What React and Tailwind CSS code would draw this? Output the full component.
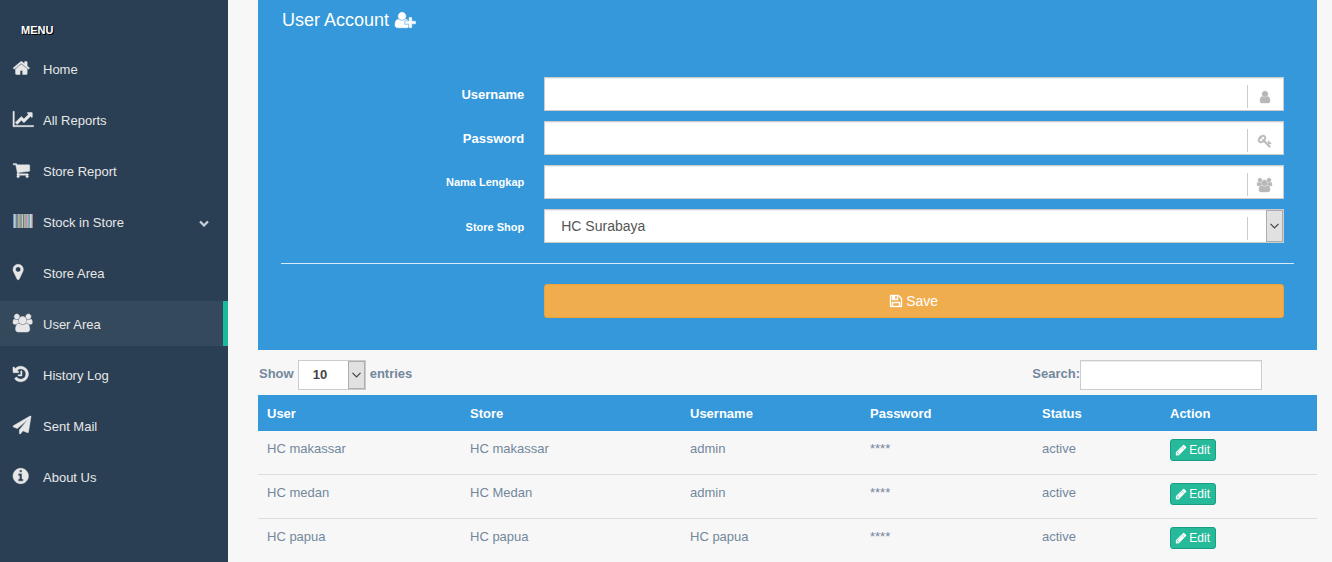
import { useState } from 'react';

// [viewBox, path] for each glyph, 1792 units tall
const glyphs = {
  home: ['64 0 1664 1792', 'M1472 992v480q0 26-19 45t-45 19h-384v-384h-256v384h-384q-26 0-45-19t-19-45v-480q0-1 .5-3t.5-3l575-474 575 474q1 2 1 6zm223-69l-62 74q-8 9-21 11h-3q-13 0-21-7l-692-577-692 577q-12 8-24 7-13-2-21-11l-62-74q-8-10-7-23.5t11-21.5l719-599q32-26 76-26t76 26l244 204v-195q0-14 9-23t23-9h192q14 0 23 9t9 23v408l219 182q10 8 11 21.5t-7 23.5z'],
  chart: ['0 0 2048 1792', 'M2048 1536v128h-2048v-1536h128v1408h1920zm-128-1248v435q0 21-19.5 29.5t-35.5-7.5l-121-121-633 633q-10 10-23 10t-23-10l-233-233-416 416-192-192 585-585q10-10 23-10t23 10l233 233 464-464-121-121q-16-16-7.5-35.5t29.5-19.5h435q14 0 23 9t9 23z'],
  cart: ['64 0 1664 1792', 'M704 1536q0 52-38 90t-90 38-90-38-38-90 38-90 90-38 90 38 38 90zm896 0q0 52-38 90t-90 38-90-38-38-90 38-90 90-38 90 38 38 90zm128-1088v512q0 24-16.5 42.5t-40.5 21.5l-1044 122q13 60 13 70 0 16-24 64h920q26 0 45 19t19 45-19 45-45 19h-1024q-26 0-45-19t-19-45q0-11 8-31.5t16-36 21.5-40 15.5-29.5l-177-823h-204q-26 0-45-19t-19-45 19-45 45-19h256q16 0 28.5 6.5t19.5 15.5 13 24.5 8 26 5.5 29.5 4.5 26h1201q26 0 45 19t19 45z'],
  marker: ['384 0 1024 1792', 'M1152 640q0-106-75-181t-181-75-181 75-75 181 75 181 181 75 181-75 75-181zm256 0q0 109-33 179l-364 774q-16 33-47.5 52t-67.5 19-67.5-19-46.5-52l-365-774q-33-70-33-179 0-212 150-362t362-150 362 150 150 362z'],
  users: ['0 0 1920 1792', 'M593 896q-162 5-265 128h-134q-82 0-138-40.5t-56-118.5q0-353 124-353 6 0 43.5 21t97.5 42.5 119 21.5q67 0 133-23-5 37-5 66 0 139 81 256zm1071 637q0 120-73 189.5t-194 69.5h-874q-121 0-194-69.5t-73-189.5q0-53 3.5-103.5t14-109 26.5-108.5 43-97.5 62-81 85.5-53.5 111.5-20q10 0 43 21.5t73 48 107 48 135 21.5 135-21.5 107-48 73-48 43-21.5q61 0 111.5 20t85.5 53.5 62 81 43 97.5 26.5 108.5 14 109 3.5 103.5zm-1024-1277q0 106-75 181t-181 75-181-75-75-181 75-181 181-75 181 75 75 181zm704 384q0 159-112.5 271.5t-271.5 112.5-271.5-112.5-112.5-271.5 112.5-271.5 271.5-112.5 271.5 112.5 112.5 271.5zm576 225q0 78-56 118.5t-138 40.5h-134q-103-123-265-128 81-117 81-256 0-29-5-66 66 23 133 23 59 0 119-21.5t97.5-42.5 43.5-21q124 0 124 353zm-128-609q0 106-75 181t-181 75-181-75-75-181 75-181 181-75 181 75 75 181z'],
  history: ['128 0 1536 1792', 'M1664 896q0 156-61 298t-164 245-245 164-298 61q-172 0-327-72.5t-264-204.5q-7-10-6.5-22.5t8.5-20.5l137-138q10-9 25-9 16 2 23 12 73 95 179 147t225 52q104 0 198.5-40.5t163.5-109.5 109.5-163.5 40.5-198.5-40.5-198.5-109.5-163.5-163.5-109.5-198.5-40.5q-98 0-188 35.5t-160 101.5l137 138q31 30 14 69-17 40-59 40h-448q-26 0-45-19t-19-45v-448q0-42 40-59 39-17 69 14l130 129q107-101 244.5-156.5t284.5-55.5q156 0 298 61t245 164 164 245 61 298zm-640-288v448q0 14-9 23t-23 9h-320q-14 0-23-9t-9-23v-64q0-14 9-23t23-9h224v-352q0-14 9-23t23-9h64q14 0 23 9t9 23z'],
  plane: ['0 0 1792 1792', 'M1764 11q33 24 27 64l-256 1536q-5 29-32 45-14 8-31 8-11 0-24-5l-453-185-242 295q-18 23-49 23-13 0-22-4-19-7-30.5-23.5t-11.5-36.5v-349l864-1059-1069 925-395-162q-37-14-40-55-2-40 32-59l1664-960q15-9 32-9 20 0 36 11z'],
  info: ['128 0 1536 1792', 'M1152 1376v-160q0-14-9-23t-23-9h-96v-512q0-14-9-23t-23-9h-320q-14 0-23 9t-9 23v160q0 14 9 23t23 9h96v320h-96q-14 0-23 9t-9 23v160q0 14 9 23t23 9h448q14 0 23-9t9-23zm-128-896v-160q0-14-9-23t-23-9h-192q-14 0-23 9t-9 23v160q0 14 9 23t23 9h192q14 0 23-9t9-23zm640 416q0 209-103 385.5t-279.5 279.5-385.5 103-385.5-103-279.5-279.5-103-385.5 103-385.5 279.5-279.5 385.5-103 385.5 103 279.5 279.5 103 385.5z'],
  chevron: ['0 0 1792 1792', 'M1683 808l-742 741q-19 19-45 19t-45-19l-742-741q-19-19-19-45.5t19-45.5l166-165q19-19 45-19t45 19l531 531 531-531q19-19 45-19t45 19l166 165q19 19 19 45.5t-19 45.5z'],
  userPlus: ['0 0 2048 1792', 'M704 896q-159 0-271.5-112.5t-112.5-271.5 112.5-271.5 271.5-112.5 271.5 112.5 112.5 271.5-112.5 271.5-271.5 112.5zm960 128h352q13 0 22.5 9.5t9.5 22.5v192q0 13-9.5 22.5t-22.5 9.5h-352v352q0 13-9.5 22.5t-22.5 9.5h-192q-13 0-22.5-9.5t-9.5-22.5v-352h-352q-13 0-22.5-9.5t-9.5-22.5v-192q0-13 9.5-22.5t22.5-9.5h352v-352q0-13 9.5-22.5t22.5-9.5h192q13 0 22.5 9.5t9.5 22.5v352zm-736 224q0 52 38 90t90 38h256v238q-68 50-171 50h-874q-121 0-194-69t-73-190q0-53 3.5-103.5t14-109 26.5-108.5 43-97.5 62-81 85.5-53.5 111.5-20q19 0 39 17 79 61 154.5 91.5t164.5 30.5 164.5-30.5 154.5-91.5q20-17 39-17 132 0 217 96h-223q-52 0-90 38t-38 90v192z'],
  user: ['256 0 1280 1792', 'M1536 1399q0 109-62.5 187t-150.5 78h-854q-88 0-150.5-78t-62.5-187q0-85 8.5-160.5t31.5-152 58.5-131 94-89 134.5-34.5q131 128 313 128t313-128q76 0 134.5 34.5t94 89 58.5 131 31.5 152 8.5 160.5zm-256-887q0 159-112.5 271.5t-271.5 112.5-271.5-112.5-112.5-271.5 112.5-271.5 271.5-112.5 271.5 112.5 112.5 271.5z'],
  key: ['0 0 1792 1792', 'M832 512q0-80-56-136t-136-56-136 56-56 136q0 42 19 83-41-19-83-19-80 0-136 56t-56 136 56 136 136 56 136-56 56-136q0-42-19-83 41 19 83 19 80 0 136-56t56-136zm851 704q0 17-49 66t-66 49q-9 0-28.5-16t-36.5-33-38.5-40-24.5-26l-96 96 220 220q28 28 28 68 0 42-39 81t-81 39q-40 0-68-28l-671-671q-176 131-365 131-163 0-265.5-102.5t-102.5-265.5q0-160 95-313t248-248 313-95q163 0 265.5 102.5t102.5 265.5q0 189-131 365l355 355 96-96q-3-3-26-24.5t-40-38.5-33-36.5-16-28.5q0-17 49-66t66-49q13 0 23 10 6 6 46 44.5t82 79.5 86.5 86 73 78 28.5 41z'],
  save: ['128 0 1536 1792', 'M512 1536h768v-384h-768v384zm896 0h128v-896q0-14-10-38.5t-20-34.5l-281-281q-10-10-34-20t-39-10v416q0 40-28 68t-68 28h-576q-40 0-68-28t-28-68v-416h-128v1280h128v-416q0-40 28-68t68-28h832q40 0 68 28t28 68v416zm-384-928v-320q0-13-9.5-22.5t-22.5-9.5h-192q-13 0-22.5 9.5t-9.5 22.5v320q0 13 9.5 22.5t22.5 9.5h192q13 0 22.5-9.5t9.5-22.5zm640 32v928q0 40-28 68t-68 28h-1344q-40 0-68-28t-28-68v-1344q0-40 28-68t68-28h928q40 0 88 20t76 48l280 280q28 28 48 76t20 88z'],
  pencil: ['128 0 1536 1792', 'M491 1536l91-91-235-235-91 91v107h128v128h107zm523-928q0-22-22-22-10 0-17 7l-542 542q-7 7-7 17 0 22 22 22 10 0 17-7l542-542q7-7 7-17zm-54-192l416 416-832 832h-416v-416zm683 96q0 53-37 90l-166 166-416-416 166-165q36-38 90-38 53 0 91 38l235 234q37 39 37 91z'],
};

const barColors = [
  '#6f8fd0', '#b9cdd6', '#9db5a8', '#8a7d70', '#5f8fb8', '#8fb5c9', '#c99a5f', '#a98f7a', '#6f9fc9', '#c9c98f',
  '#5f7f9f', '#b9b06f', '#8fa9c9', '#c98f9f', '#b5a9d0', '#7fb5a8', '#7f9fc0', '#d0d6d9', '#b9c0c4', '#a87f7f',
];

const menu = [
  { label: 'Home', icon: 'home' },
  { label: 'All Reports', icon: 'chart' },
  { label: 'Store Report', icon: 'cart' },
  { label: 'Stock in Store', icon: 'barcode', children: true },
  { label: 'Store Area', icon: 'marker' },
  { label: 'User Area', icon: 'users', active: true },
  { label: 'History Log', icon: 'history' },
  { label: 'Sent Mail', icon: 'plane' },
  { label: 'About Us', icon: 'info' },
];

const fields = [
  { id: 'username', label: 'Username', type: 'text', icon: 'user', labelStyle: 'pt-[2px] text-[13px]' },
  { id: 'password', label: 'Password', type: 'password', icon: 'key', labelStyle: 'pt-[2px] text-[13px]' },
  { id: 'fullname', label: 'Nama Lengkap', type: 'text', icon: 'users', labelStyle: 'text-[11px]' },
];

const rows = [
  { user: 'HC makassar', store: 'HC makassar', username: 'admin' },
  { user: 'HC medan', store: 'HC Medan', username: 'admin' },
  { user: 'HC papua', store: 'HC papua', username: 'HC papua' },
];

function Icon({ name, className }) {
  if (name === 'barcode') {
    return (
      <svg viewBox="0 0 20 18" className={className} aria-hidden="true">
        {barColors.map((color, i) => (
          <rect key={i} x={i} y="2" width="1" height="14" fill={color} />
        ))}
      </svg>
    );
  }
  const [viewBox, d] = glyphs[name];
  return (
    <svg
      viewBox={viewBox}
      fill="currentColor"
      stroke="currentColor"
      strokeWidth="50"
      className={`overflow-visible ${className}`}
      aria-hidden="true"
    >
      <path d={d} />
    </svg>
  );
}

function SelectArrow() {
  return (
    <span className="pointer-events-none absolute top-px right-px bottom-px flex w-[17px] items-center justify-center border border-[#adadad] bg-[#e1e1e1]">
      <svg viewBox="0 0 9 6" className="w-[9px]" fill="none" stroke="#444" aria-hidden="true">
        <path d="M.5 .8l4 4 4-4" strokeWidth="1.2" />
      </svg>
    </span>
  );
}

function Sidebar() {
  return (
    <nav className="w-[228px] shrink-0 bg-[#2a3f54] pt-[22px] text-[#e7e7e7]">
      <h3 className="mb-2 pl-[21px] text-[11px] leading-4 font-bold text-white [text-shadow:1px_1px_#000]">MENU</h3>
      <ul className="flex flex-col gap-[6px]">
        {menu.map((item) => (
          <li key={item.label}>
            <a
              href="#"
              className={`flex h-[45px] items-center pt-[2px] pl-[13px] ${
                item.active ? 'border-r-[5px] border-[#1abb9c] bg-[#35495d]' : ''
              }`}
            >
              <span className="w-[30px] pb-[3px]">
                <Icon name={item.icon} className="h-[18px]" />
              </span>
              <span className="grow">{item.label}</span>
              {item.children && <Icon name="chevron" className="mr-[19px] h-[10px] text-[#c4cfda]" />}
            </a>
          </li>
        ))}
      </ul>
    </nav>
  );
}

function UserForm() {
  const [form, setForm] = useState({ username: '', password: '', fullname: '', store: 'HC Surabaya' });

  const handleChange = (e) => {
    setForm({ ...form, [e.target.name]: e.target.value });
  };

  return (
    <section className="bg-[#3498db] px-[23px] pb-8 text-white">
      <h2 className="flex items-center gap-[6px] pt-2 pb-[45px] pl-px text-lg leading-6">
        User Account <Icon name="userPlus" className="h-[18px]" />
      </h2>
      <form onSubmit={(e) => e.preventDefault()}>
        {fields.map((field) => (
          <div className="mb-[10px] flex items-center" key={field.id}>
            <label className={`w-1/4 pr-[10px] text-right font-bold ${field.labelStyle}`} htmlFor={field.id}>
              {field.label}
            </label>
            <div className="relative mx-[10px] grow">
              <input
                id={field.id}
                name={field.id}
                type={field.type}
                value={form[field.id]}
                onChange={handleChange}
                className="block h-[34px] w-full border border-[#ccc] bg-white pr-12 pl-3 text-sm text-[#555] shadow-[inset_0_1px_1px_rgba(0,0,0,0.075)] outline-none"
              />
              <span className="absolute top-2 right-0 flex h-[23px] w-[37px] items-center justify-center border-l border-[#ccc] pr-[3px] text-[#b8b8b8]">
                <Icon name={field.icon} className="h-[14px]" />
              </span>
            </div>
          </div>
        ))}
        <div className="mb-[10px] flex items-center">
          <label className="w-1/4 pt-[2px] pr-[10px] text-right text-[11px] font-bold" htmlFor="store">
            Store Shop
          </label>
          <div className="relative mx-[10px] grow">
            <select
              id="store"
              name="store"
              value={form.store}
              onChange={handleChange}
              className="block h-[34px] w-full appearance-none border border-[#ccc] bg-white px-4 text-sm text-[#555] shadow-[inset_0_1px_1px_rgba(0,0,0,0.075)] outline-none"
            >
              <option>HC Surabaya</option>
              <option>HC makassar</option>
              <option>HC Medan</option>
              <option>HC papua</option>
            </select>
            <span className="pointer-events-none absolute top-2 right-0 h-[23px] w-[37px] border-l border-[#ccc]" />
            <SelectArrow />
          </div>
        </div>
        <hr className="mt-5 mb-5 border-[#d6eaf8]" />
        <div className="mr-[10px] ml-[25%] pl-[10px]">
          <button
            type="submit"
            className="flex h-[34px] w-full items-center justify-center gap-1 rounded-[3px] border border-[#eea236] bg-[#f0ad4e] text-sm"
          >
            <Icon name="save" className="h-[14px]" /> Save
          </button>
        </div>
      </form>
    </section>
  );
}

function UserTable() {
  const [pageSize, setPageSize] = useState('10');
  const [search, setSearch] = useState('');

  const visible = rows.filter((row) => row.user.toLowerCase().includes(search.toLowerCase()));

  return (
    <section>
      <div className="flex justify-between pt-[10px] pr-[55px] pb-[5px] pl-px font-bold">
        <label className="flex gap-1">
          <span className="leading-[27px]">Show</span>
          <span className="relative">
            <select
              value={pageSize}
              onChange={(e) => setPageSize(e.target.value)}
              className="block h-[30px] w-[68px] appearance-none border border-[#ccc] bg-white pl-[14px] text-[#444] outline-none"
            >
              <option>10</option>
              <option>25</option>
              <option>50</option>
              <option>100</option>
            </select>
            <SelectArrow />
          </span>
          <span className="leading-[27px]">entries</span>
        </label>
        <label className="flex">
          <span className="leading-[27px]">Search:</span>
          <input
            type="search"
            value={search}
            onChange={(e) => setSearch(e.target.value)}
            className="h-[30px] w-[182px] border border-[#ccc] bg-white px-2 font-normal shadow-[inset_0_1px_1px_rgba(0,0,0,0.075)] outline-none"
          />
        </label>
      </div>
      <table className="w-full table-fixed border-separate border-spacing-0 text-left">
        <colgroup>
          <col className="w-[203px]" />
          <col className="w-[220px]" />
          <col className="w-[180px]" />
          <col className="w-[172px]" />
          <col className="w-[128px]" />
          <col />
        </colgroup>
        <thead className="bg-[#3498db] text-white">
          <tr>
            {['User', 'Store', 'Username', 'Password', 'Status', 'Action'].map((heading) => (
              <th key={heading} className="h-9 pt-[2px] pl-[9px] font-bold">{heading}</th>
            ))}
          </tr>
        </thead>
        <tbody>
          {visible.map((row) => (
            <tr key={row.user} className="align-top">
              <td className="h-11 border-b border-[#ddd] pt-[9px] pl-[9px]">{row.user}</td>
              <td className="border-b border-[#ddd] pt-[9px] pl-[9px]">{row.store}</td>
              <td className="border-b border-[#ddd] pt-[9px] pl-[9px]">{row.username}</td>
              <td className="border-b border-[#ddd] pt-[9px] pl-[9px]">****</td>
              <td className="border-b border-[#ddd] pt-[9px] pl-[9px]">active</td>
              <td className="border-b border-[#ddd] pt-2 pl-[9px]">
                <button
                  type="button"
                  className="flex h-[22px] items-center gap-[3px] rounded-[3px] border border-[#169f85] bg-[#26b99a] px-[5px] text-xs text-white"
                >
                  <Icon name="pencil" className="h-3" /> Edit
                </button>
              </td>
            </tr>
          ))}
        </tbody>
      </table>
    </section>
  );
}

export default function App() {
  return (
    <div className="flex h-screen overflow-hidden bg-[#f7f7f7] font-['Liberation_Sans',Arial,sans-serif] text-[13px] leading-[18px] text-[#73879c]">
      <Sidebar />
      <main className="grow pr-[15px] pl-[30px]">
        <UserForm />
        <UserTable />
      </main>
    </div>
  );
}
